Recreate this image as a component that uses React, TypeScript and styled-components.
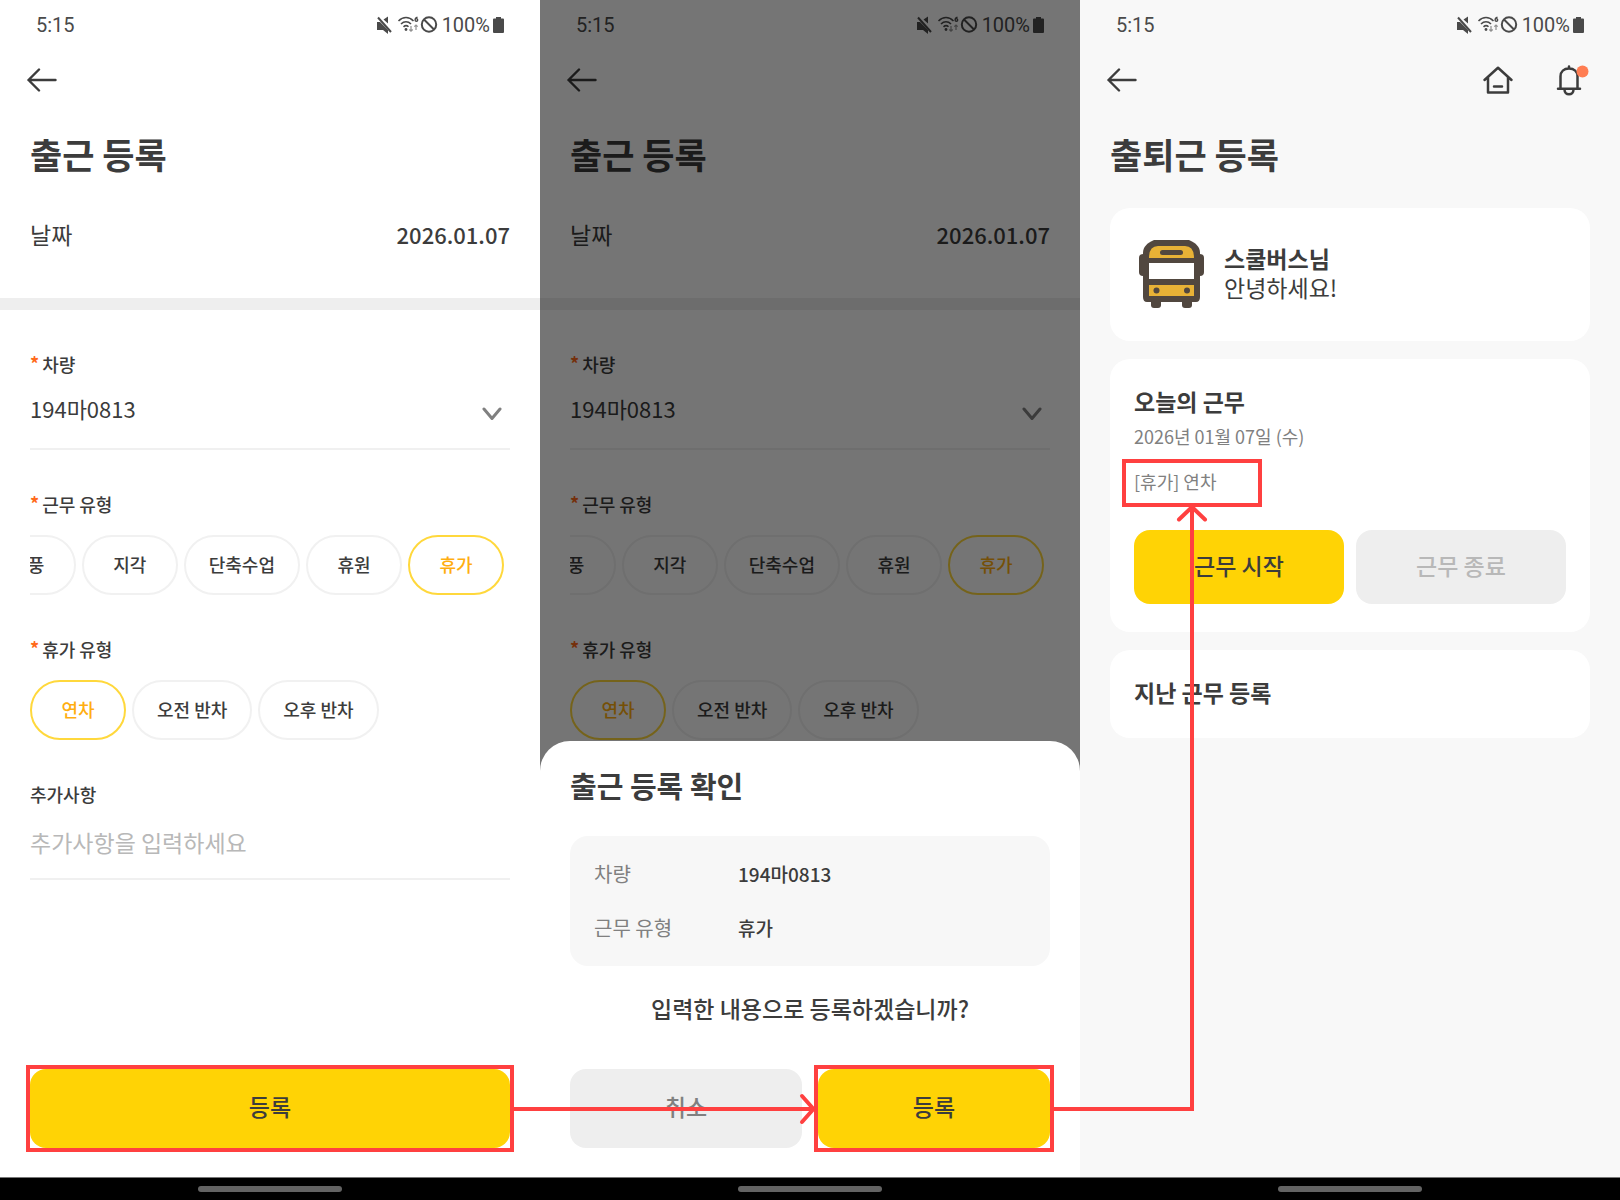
import React, { useId } from "react";
import styled, { createGlobalStyle, css } from "styled-components";

const color = {
  text: "#3c3c3c",
  status: "#4a4a4a",
  muted: "#808080",
  faint: "#b8b8b8",
  line: "#f0f0f0",
  fill: "#eeeeee",
  surface: "#f8f8f8",
  yellow: "#ffd305",
  amber: "#ffae10",
  required: "#ff6a1a",
  mark: "#ff4040",
  bus: "#51473f",
};

const GlobalStyle = createGlobalStyle`
  *, *::before, *::after { box-sizing: border-box; }
  body {
    margin: 0;
    background: #fff;
    color: ${color.text};
    font-family: "Noto Sans CJK KR", "Noto Sans", sans-serif;
    font-size: 23px;
    line-height: 28px;
  }
  button, input, select { font: inherit; color: inherit; margin: 0; }
  h1, h2, h3, p, dl, dd, dt { margin: 0; }
`;

const Board = styled.main`
  position: relative;
  display: grid;
  grid-template-columns: repeat(3, minmax(0, 1fr));
  min-height: 100vh;
`;

const Phone = styled.section<{ $tinted?: boolean }>`
  position: relative;
  display: flex;
  flex-direction: column;
  background: ${(p) => (p.$tinted ? color.surface : "#fff")};
`;

const StatusRow = styled.div`
  display: flex;
  align-items: center;
  justify-content: space-between;
  height: 48px;
  padding: 2px 36px 0;
  color: ${color.status};
  font-family: Roboto, sans-serif;
  font-size: 20px;
`;

const StatusIcons = styled.div`
  display: flex;
  align-items: center;
  gap: 3px;
  svg { display: block; }
`;

const AppBar = styled.header`
  display: flex;
  align-items: center;
  justify-content: space-between;
  height: 64px;
  padding: 0 28px 0 24px;
`;

const IconButton = styled.button`
  display: grid;
  place-items: center;
  width: 36px;
  height: 36px;
  padding: 0;
  border: 0;
  background: none;
  svg { display: block; }
`;

const AppBarActions = styled.div`
  display: flex;
  gap: 40px;
`;

const Title = styled.h1`
  padding: 16px 30px 0;
  font-size: 35px;
  font-weight: 700;
  line-height: 52px;
`;

const DateRow = styled.div`
  display: flex;
  align-items: center;
  justify-content: space-between;
  height: 130px;
  padding: 0 30px 10px;
  border-bottom: 12px solid ${color.fill};
  strong { font-size: 22px; font-weight: 500; }
`;

const Form = styled.form`
  display: flex;
  flex: 1;
  flex-direction: column;
  padding: 40px 30px 0;
`;

const Field = styled.div<{ $height: number }>`
  display: flex;
  flex-direction: column;
  height: ${(p) => p.$height}px;
`;

const Label = styled.label`
  display: flex;
  gap: 3px;
  font-size: 18px;
  font-weight: 500;
  line-height: 28px;
`;

const Required = styled.span`
  color: ${color.required};
  font-weight: 700;
  line-height: 26px;
`;

const SelectBox = styled.div`
  display: grid;
  align-items: center;
  height: 72px;
  border-bottom: 2px solid ${color.line};
  select, svg { grid-area: 1 / 1; }
  svg { justify-self: end; margin: 2px 8px 0 0; pointer-events: none; }
`;

const Select = styled.select`
  width: 100%;
  height: 60px;
  padding: 0 0 10px;
  border: 0;
  appearance: none;
  background: none;
  font-size: 22px;
`;

const TextInput = styled.input`
  width: 100%;
  height: 72px;
  padding: 0 0 3px;
  border: 0;
  border-bottom: 2px solid ${color.line};
  background: none;
  &::placeholder { color: ${color.faint}; opacity: 1; }
`;

const Chips = styled.div<{ $scrolledToEnd?: boolean }>`
  display: flex;
  gap: 6px;
  margin-top: 17px;
  overflow: hidden;
  ${(p) =>
    p.$scrolledToEnd &&
    css`
      justify-content: flex-end;
      padding-right: 6px;
    `}
`;

const Chip = styled.button<{ $active?: boolean }>`
  flex: none;
  min-width: 96px;
  height: 60px;
  padding: 0 23px 2px;
  border: 2px solid ${(p) => (p.$active ? "#ffd83c" : "#f1f1f1")};
  border-radius: 30px;
  background: #fff;
  color: ${(p) => (p.$active ? color.amber : color.text)};
  font-size: 18px;
  font-weight: 500;
`;

const Footer = styled.div`
  display: flex;
  gap: 16px;
  padding: 0 30px 29px;
`;

const Marked = styled.div`
  display: flex;
  flex: 1;
  min-width: 0;
  box-shadow: 0 0 0 4px ${color.mark};
`;

const Action = styled.button<{ $tone: "primary" | "plain" | "disabled"; $compact?: boolean }>`
  flex: 1;
  min-width: 0;
  height: ${(p) => (p.$compact ? 74 : 79)}px;
  padding: 0 0 5px;
  border: 0;
  border-radius: 16px;
  font-weight: 500;
  background: ${(p) => (p.$tone === "primary" ? color.yellow : color.fill)};
  color: ${(p) =>
    p.$tone === "primary" ? color.text : p.$tone === "plain" ? color.muted : color.faint};
`;

const GestureBar = styled.div`
  position: relative;
  z-index: 1;
  display: grid;
  place-items: center;
  height: 23px;
  border-top: 1px solid #777;
  background: #000;
  &::after {
    content: "";
    width: 144px;
    height: 6px;
    border-radius: 3px;
    background: #636363;
  }
`;

const Backdrop = styled.div`
  position: absolute;
  inset: 0;
  background: rgba(0, 0, 0, 0.54);
`;

const Sheet = styled.div`
  position: absolute;
  right: 0;
  bottom: 23px;
  left: 0;
  border-radius: 30px 30px 0 0;
  background: #fff;
`;

const SheetTitle = styled.h2`
  padding: 22px 30px 29px;
  font-size: 29px;
  font-weight: 700;
  line-height: 44px;
`;

const Summary = styled.dl`
  display: grid;
  grid-template-columns: 144px 1fr;
  row-gap: 26px;
  margin: 0 30px;
  padding: 24px;
  border-radius: 18px;
  background: #f7f7f7;
  font-size: 20px;
  dt { color: ${color.muted}; }
  dd { font-size: 19px; font-weight: 500; }
`;

const Question = styled.p`
  padding: 28px 30px 47px;
  font-weight: 500;
  text-align: center;
`;

const Cards = styled.div`
  display: flex;
  flex: 1;
  flex-direction: column;
  gap: 18px;
  padding: 28px 30px 0;
`;

const Card = styled.article`
  min-height: 88px;
  padding: 27px 24px 28px;
  border-radius: 20px;
  background: #fff;
`;

const Greeting = styled(Card)`
  display: flex;
  align-items: center;
  gap: 20px;
  height: 133px;
  svg { display: block; margin-left: 5px; }
`;

const GreetingText = styled.div`
  padding-bottom: 5px;
`;

const CardTitle = styled.h2`
  font-size: 23px;
  font-weight: 700;
  line-height: 30px;
`;

const Today = styled.p`
  margin: 6px 0 9px;
  color: ${color.muted};
  font-size: 18px;
`;

const LeaveTag = styled.p`
  width: 140px;
  height: 48px;
  margin: 0 0 23px -12px;
  padding: 4px 0 0 8px;
  border: 4px solid ${color.mark};
  color: ${color.muted};
  font-size: 18px;
`;

const CardActions = styled.div`
  display: flex;
  gap: 12px;
`;

const FlowToConfirm = styled.div`
  position: absolute;
  right: calc(50% - 4px);
  bottom: 77px;
  left: calc(100% / 3 - 26px);
  z-index: 2;
  display: flex;
  align-items: center;
  justify-content: flex-end;
  height: 28px;
  background: linear-gradient(${color.mark}, ${color.mark}) center / 100% 4px no-repeat;
  pointer-events: none;
  svg { overflow: visible; }
`;

const FlowToResult = styled.div`
  position: absolute;
  top: 507px;
  bottom: 89px;
  left: calc(200% / 3 - 26px);
  z-index: 2;
  width: 140px;
  border: solid ${color.mark};
  border-width: 0 4px 4px 0;
  pointer-events: none;
  svg {
    position: absolute;
    top: 0;
    right: -16px;
    overflow: visible;
  }
`;

function StatusBar() {
  return (
    <StatusRow>
      <span>5:15</span>
      <StatusIcons>
        <svg width="62" height="20" viewBox="0 0 62 20" fill="none" stroke={color.status}>
          <path d="M0 7h3l8 8v4l-5-4H0zM6.500 4.500 11 1.500V8.500z" fill={color.status} stroke="none" />
          <path d="M1 2.500 14 17" strokeWidth="2" />
          <path d="M21.500 6c4.500-4.600 10.500-4.600 15 0M24 9c3-3 7-3 10 0M26.500 11.800c1.700-1.500 3.500-1.500 5 0" strokeWidth="1.600" />
          <circle cx="29" cy="14.500" r="1.400" fill={color.status} stroke="none" />
          <path d="M40.500 2.200c-2 .5-2.400 1.700-2.400 2.800a1.300 1.300 0 1 0 1.300-1.300" strokeWidth="1.400" />
          <path d="M34 11v5M32.300 14.500 34 16.200l1.700-1.700M39 15v-5M37.300 11.700 39 10l1.700 1.700" strokeWidth="1.200" opacity=".6" />
          <circle cx="52" cy="9.500" r="7.200" strokeWidth="2" />
          <path d="m47 4.500 10 10" strokeWidth="2" />
        </svg>
        <span>100%</span>
        <svg width="11" height="18" viewBox="0 0 11 18">
          <path d="M3 1h5v1.500h2q1 0 1 1V16q0 1-1 1H1q-1 0-1-1V3.500q0-1 1-1h2z" fill={color.status} />
        </svg>
      </StatusIcons>
    </StatusRow>
  );
}

function BackButton() {
  return (
    <IconButton type="button" aria-label="뒤로">
      <svg width="30" height="24" viewBox="0 0 30 24" fill="none" stroke={color.text} strokeWidth="2.400" strokeLinecap="round" strokeLinejoin="round">
        <path d="M28.500 12H1.500M12 1.500 1.500 12 12 22.500" />
      </svg>
    </IconButton>
  );
}

function AttendanceForm({ action }: { action?: React.ReactNode }) {
  const id = useId();
  return (
    <>
      <StatusBar />
      <AppBar>
        <BackButton />
      </AppBar>
      <Title>출근 등록</Title>
      <DateRow>
        <span>날짜</span>
        <strong>2026.01.07</strong>
      </DateRow>
      <Form>
        <Field $height={140}>
          <Label htmlFor={`${id}-car`}>
            <Required>*</Required>차량
          </Label>
          <SelectBox>
            <Select id={`${id}-car`} defaultValue="194마0813">
              <option>194마0813</option>
            </Select>
            <svg width="20" height="14" viewBox="0 0 20 14" fill="none" stroke={color.muted} strokeWidth="3" strokeLinecap="round" strokeLinejoin="round">
              <path d="m2 2 8 9.500L18 2" />
            </svg>
          </SelectBox>
        </Field>
        <Field $height={145} role="group" aria-labelledby={`${id}-work`}>
          <Label as="span" id={`${id}-work`}>
            <Required>*</Required>근무 유형
          </Label>
          <Chips $scrolledToEnd>
            <Chip type="button">소풍</Chip>
            <Chip type="button">지각</Chip>
            <Chip type="button">단축수업</Chip>
            <Chip type="button">휴원</Chip>
            <Chip type="button" $active>휴가</Chip>
          </Chips>
        </Field>
        <Field $height={145} role="group" aria-labelledby={`${id}-leave`}>
          <Label as="span" id={`${id}-leave`}>
            <Required>*</Required>휴가 유형
          </Label>
          <Chips>
            <Chip type="button" $active>연차</Chip>
            <Chip type="button">오전 반차</Chip>
            <Chip type="button">오후 반차</Chip>
          </Chips>
        </Field>
        <Field $height={100}>
          <Label htmlFor={`${id}-note`}>추가사항</Label>
          <TextInput id={`${id}-note`} placeholder="추가사항을 입력하세요" />
        </Field>
      </Form>
      {action}
      <GestureBar />
    </>
  );
}

function BusIcon() {
  return (
    <svg width="65" height="70" viewBox="0 0 65 70" aria-hidden="true">
      <g fill={color.bus}>
        <path d="M15 1h35c7 3 11 7 11 13v44q0 5-4 5H8q-4 0-4-5V14C4 8 8 4 15 1z" />
        <rect x="0" y="15" width="10" height="22" rx="4" />
        <rect x="55" y="15" width="10" height="22" rx="4" />
        <rect x="12" y="60" width="10" height="9" rx="3" />
        <rect x="43" y="60" width="10" height="9" rx="3" />
      </g>
      <path d="M10 19q0-12 9-12h27q9 0 9 12zM10 46h45v11H10z" fill="#e8b236" />
      <path d="M10 24h45v16H10z" fill="#fff" />
      <rect x="21" y="11" width="23" height="5" rx="2.500" fill={color.bus} />
      <circle cx="17.500" cy="51.500" r="3" fill={color.bus} />
      <circle cx="48" cy="51.500" r="3" fill={color.bus} />
    </svg>
  );
}

export default function App() {
  return (
    <>
      <GlobalStyle />
      <Board>
        <Phone>
          <AttendanceForm
            action={
              <Footer>
                <Marked>
                  <Action type="button" $tone="primary">등록</Action>
                </Marked>
              </Footer>
            }
          />
        </Phone>

        <Phone>
          <AttendanceForm />
          <Backdrop />
          <Sheet role="dialog" aria-label="출근 등록 확인">
            <SheetTitle>출근 등록 확인</SheetTitle>
            <Summary>
              <dt>차량</dt>
              <dd>194마0813</dd>
              <dt>근무 유형</dt>
              <dd>휴가</dd>
            </Summary>
            <Question>입력한 내용으로 등록하겠습니까?</Question>
            <Footer>
              <Action type="button" $tone="plain">취소</Action>
              <Marked>
                <Action type="button" $tone="primary">등록</Action>
              </Marked>
            </Footer>
          </Sheet>
        </Phone>

        <Phone $tinted>
          <StatusBar />
          <AppBar>
            <BackButton />
            <AppBarActions>
              <IconButton type="button" aria-label="홈">
                <svg width="32" height="32" viewBox="0 0 32 32" fill="none" stroke={color.text} strokeWidth="2.500" strokeLinecap="round" strokeLinejoin="round">
                  <path d="M2.500 16 16 3.800 29.500 16M6 13.500v15h20v-15M12 22.400h8" />
                </svg>
              </IconButton>
              <IconButton type="button" aria-label="알림">
                <svg width="36" height="36" viewBox="0 0 36 36" fill="none" stroke={color.text} strokeWidth="2.500" strokeLinecap="round">
                  <path d="M2 26.800h22M4.500 26.500V14.500C4.500 9.500 8 6.500 13 6.500s8.500 3 8.500 8v12M13 6V4.500M8.500 27.500c0 3 2 4.800 4.500 4.800s4.500-1.800 4.500-4.800" />
                  <circle cx="26.500" cy="9.500" r="6" fill="#ff7d52" stroke="none" />
                </svg>
              </IconButton>
            </AppBarActions>
          </AppBar>
          <Title>출퇴근 등록</Title>
          <Cards>
            <Greeting>
              <BusIcon />
              <GreetingText>
                <CardTitle>스쿨버스님</CardTitle>
                <p>안녕하세요!</p>
              </GreetingText>
            </Greeting>
            <Card>
              <CardTitle>오늘의 근무</CardTitle>
              <Today>2026년 01월 07일 (수)</Today>
              <LeaveTag>[휴가] 연차</LeaveTag>
              <CardActions>
                <Action type="button" $tone="primary" $compact>근무 시작</Action>
                <Action type="button" $tone="disabled" $compact disabled>근무 종료</Action>
              </CardActions>
            </Card>
            <Card>
              <CardTitle>지난 근무 등록</CardTitle>
            </Card>
          </Cards>
          <GestureBar />
        </Phone>

        <FlowToConfirm>
          <svg width="16" height="28" viewBox="0 0 16 28" fill="none" stroke={color.mark} strokeWidth="4" strokeLinecap="round" strokeLinejoin="round">
            <path d="M4 1 15.500 14 4 27" />
          </svg>
        </FlowToConfirm>
        <FlowToResult>
          <svg width="28" height="16" viewBox="0 0 28 16" fill="none" stroke={color.mark} strokeWidth="4" strokeLinecap="round" strokeLinejoin="round">
            <path d="M1 12.500 14 0 27 12.500" />
          </svg>
        </FlowToResult>
      </Board>
    </>
  );
}
